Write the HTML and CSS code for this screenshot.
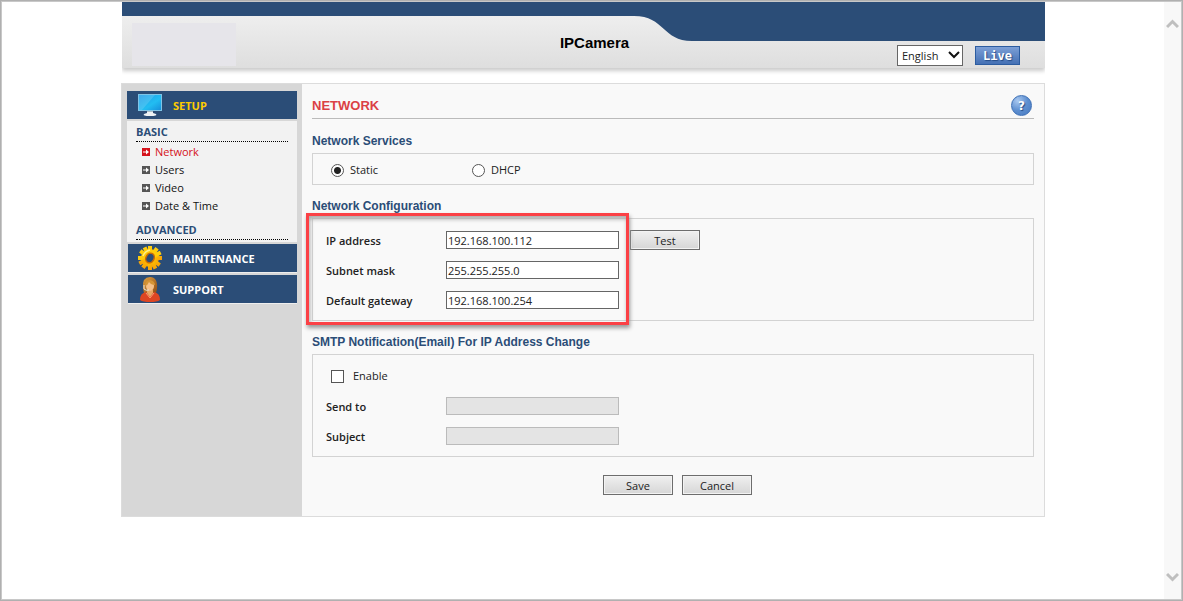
FILE: index.html
```html
<!DOCTYPE html>
<html lang="en">
<head>
	<meta charset="UTF-8">
	<meta name="viewport" content="width=device-width, initial-scale=1.0">
	<title>IPCamera</title>
	<link rel="stylesheet" href="styles.css">
</head>
<body>
<svg class="defs" aria-hidden="true">
	<defs>
		<linearGradient id="screen" x1="0" y1="0" x2="1" y2="1">
			<stop offset="0" stop-color="#1f9be6"/>
			<stop offset="0.6" stop-color="#22bdf2"/>
			<stop offset="1" stop-color="#1790dc"/>
		</linearGradient>
		<linearGradient id="gold" x1="0" y1="0" x2="1" y2="1">
			<stop offset="0" stop-color="#ffd21a"/>
			<stop offset="0.5" stop-color="#ffc800"/>
			<stop offset="1" stop-color="#ee7a10"/>
		</linearGradient>
		<linearGradient id="hair" x1="0" y1="0" x2="1" y2="1">
			<stop offset="0" stop-color="#e0a040"/>
			<stop offset="1" stop-color="#8f4d14"/>
		</linearGradient>
		<symbol id="arrow" viewBox="0 0 8 8">
			<rect width="8" height="8" fill="currentColor"/>
			<path d="M1 3.5h3V1.6L7 4 4 6.4V4.5H1z" fill="#fff"/>
		</symbol>
	</defs>
</svg>

<div class="window">
	<div class="page">
		<header class="banner">
			<svg class="banner-shape" viewBox="0 0 923 39" preserveAspectRatio="none" aria-hidden="true">
				<path d="M0 0H923V39H570C540 39 543 14 512 14H0z" fill="#2b4d77"/>
			</svg>
			<div class="logo"></div>
			<h1>IPCamera</h1>
			<div class="banner-tools">
				<div class="language">
					<select aria-label="Language">
						<option>English</option>
					</select>
					<svg width="12" height="8" viewBox="0 0 12 8" aria-hidden="true"><path d="M1 1l5 5 5-5" fill="none" stroke="#111" stroke-width="2"/></svg>
				</div>
				<button type="button" class="live">Live</button>
			</div>
		</header>

		<div class="content">
			<nav class="sidebar">
				<a href="#" class="menu-title active">
					<svg width="26" height="24" viewBox="0 0 26 24" aria-hidden="true">
						<rect x="1" y="1" width="24" height="17" fill="#7fc4e6"/>
						<rect x="2" y="2" width="22" height="15" fill="url(#screen)"/>
						<path d="M2 2h16L5 17H2z" fill="#fff" opacity=".15"/>
						<path d="M10 18h6v2l3 1q2 2-6 2t-6-2l3-1z" fill="#eef2f5"/>
						<path d="M10 18h6v1h-6z" fill="#a9bdc8"/>
					</svg>
					<span>SETUP</span>
				</a>
				<div class="submenu">
					<h2>BASIC</h2>
					<ul>
						<li><a href="#" class="selected"><svg width="8" height="8"><use href="#arrow"/></svg><span>Network</span></a></li>
						<li><a href="#"><svg width="8" height="8"><use href="#arrow"/></svg><span>Users</span></a></li>
						<li><a href="#"><svg width="8" height="8"><use href="#arrow"/></svg><span>Video</span></a></li>
						<li><a href="#"><svg width="8" height="8"><use href="#arrow"/></svg><span>Date &amp; Time</span></a></li>
					</ul>
					<h2>ADVANCED</h2>
				</div>
				<a href="#" class="menu-title lower">
					<svg width="26" height="26" viewBox="0 0 26 26" aria-hidden="true">
						<g fill="url(#gold)">
							<circle cx="13" cy="13" r="9"/>
							<path d="M11 1h4v24h-4zM1 11h24v4H1z"/>
							<path d="M11 1h4v24h-4zM1 11h24v4H1z" transform="rotate(36 13 13)"/>
							<path d="M11 1h4v24h-4zM1 11h24v4H1z" transform="rotate(63 13 13)"/>
						</g>
						<ellipse cx="13" cy="13" rx="4" ry="5" fill="#2b4d77" stroke="#c96a08" stroke-width="1.5" transform="rotate(30 13 13)"/>
						<path d="M6 11q2-5 7-6" fill="none" stroke="#fff18a" stroke-width="1.5"/>
					</svg>
					<span>MAINTENANCE</span>
				</a>
				<a href="#" class="menu-title lower">
					<svg width="26" height="26" viewBox="0 0 26 26" aria-hidden="true">
						<path d="M6 12Q5 1 13 1q8 0 7 12l-1 4H7z" fill="url(#hair)"/>
						<path d="M3 24q0-7 6-8l4 3 4-3q6 1 6 8-3 2-10 2T3 24z" fill="#dd4623"/>
						<path d="M10 14h6v3l-3 4-3-4z" fill="#e9a764"/>
						<ellipse cx="13" cy="10" rx="4" ry="5" fill="#f6c088"/>
						<path d="M8 10q0-6 5-6 5 1 5 5-4 0-6-3-1 3-4 4z" fill="#d59536"/>
						<path d="M7 9v4q2 2 5 1" fill="none" stroke="#e9e4dc"/>
						<path d="M9 17l4 5 4-5" fill="none" stroke="#ff9a70"/>
					</svg>
					<span>SUPPORT</span>
				</a>
			</nav>

			<main>
				<div class="heading">
					<h2>NETWORK</h2>
					<button type="button" class="help" aria-label="Help">?</button>
				</div>

				<form>
					<h3>Network Services</h3>
					<div class="box services">
						<label><input type="radio" name="service" checked> Static</label>
						<label><input type="radio" name="service"> DHCP</label>
					</div>

					<h3>Network Configuration</h3>
					<div class="box config">
						<div class="row">
							<label for="ip">IP address</label>
							<input type="text" id="ip" value="192.168.100.112">
							<button type="button" class="btn">Test</button>
						</div>
						<div class="row">
							<label for="mask">Subnet mask</label>
							<input type="text" id="mask" value="255.255.255.0">
						</div>
						<div class="row">
							<label for="gateway">Default gateway</label>
							<input type="text" id="gateway" value="192.168.100.254">
						</div>
						<div class="highlight"></div>
					</div>

					<h3>SMTP Notification(Email) For IP Address Change</h3>
					<div class="box">
						<div class="row">
							<label class="enable"><input type="checkbox"> Enable</label>
						</div>
						<div class="row">
							<label for="sendto">Send to</label>
							<input type="text" id="sendto" disabled>
						</div>
						<div class="row">
							<label for="subject">Subject</label>
							<input type="text" id="subject" disabled>
						</div>
					</div>

					<div class="actions">
						<button type="button" class="btn">Save</button>
						<button type="button" class="btn">Cancel</button>
					</div>
				</form>
			</main>
		</div>
	</div>

	<div class="scrollbar" aria-hidden="true">
		<svg width="13" height="10" viewBox="0 0 13 10"><path d="M1 8l5.500-5.500L12 8" fill="none" stroke="#bfbfbf" stroke-width="3"/></svg>
		<svg width="13" height="10" viewBox="0 0 13 10"><path d="M1 2l5.500 5.500L12 2" fill="none" stroke="#bfbfbf" stroke-width="3"/></svg>
	</div>
</div>
</body>
</html>
```
FILE: styles.css
```css
* {
	box-sizing: border-box;
}

body {
	margin: 0;
	font-family: "Open Sans", "Noto Sans", sans-serif;
	font-size: 11px;
	color: #222;
	background-color: #fff;
}

h1, h2, h3, ul {
	margin: 0;
	padding: 0;
}

a {
	color: inherit;
	text-decoration: none;
}

input, select, button {
	font: inherit;
	color: inherit;
	margin: 0;
}

.defs {
	position: absolute;
	width: 0;
	height: 0;
}

.window {
	display: flex;
	min-height: 100vh;
	border: 1px solid #b0b0b0;
	box-shadow: inset 0 0 0 1px #c8c8c8;
	padding: 1px;
}

.page {
	flex: 1;
	max-width: 924px;
	margin: 0 auto;
}

.scrollbar {
	display: flex;
	flex-direction: column;
	justify-content: space-between;
	align-items: center;
	width: 17px;
	padding: 17px 0;
	background-color: #f8f8f8;
}

/* banner */
.banner {
	position: relative;
	display: grid;
	grid-template-columns: 1fr auto 1fr;
	align-items: end;
	height: 66px;
	margin-left: 1px;
	padding: 0 25px 2px 10px;
	background: linear-gradient(#eee 14px, #dedede);
	box-shadow: 0 3px 4px #ccc;
	clip-path: inset(0 0 -8px 0);
}

.banner-shape {
	position: absolute;
	top: 0;
	left: 0;
	width: 100%;
	height: 39px;
}

.logo {
	width: 104px;
	height: 43px;
	background-color: #e6e5ea;
}

.banner h1 {
	position: relative;
	padding: 0 0 14px 37px;
	font: bold 15px/18px "Liberation Sans", Arial, sans-serif;
	color: #000;
}

.banner-tools {
	display: flex;
	justify-content: flex-end;
	gap: 12px;
}

.language {
	position: relative;
}

.language select {
	display: block;
	appearance: none;
	width: 66px;
	height: 21px;
	padding: 0 4px;
	border: 1px solid #666;
	border-radius: 0;
	background-color: #fff;
}

.language svg {
	position: absolute;
	top: 6px;
	right: 3px;
	pointer-events: none;
}

.live {
	align-self: center;
	width: 45px;
	height: 19px;
	padding: 0;
	border: 1px solid #2c5ca0;
	background: linear-gradient(#7c9fd6, #4470b4);
	color: #fff;
	font: bold 12px/16px "DejaVu Sans Mono", monospace;
	text-shadow: 1px 1px 1px #234a85;
}

/* layout */
.content {
	display: flex;
	min-height: 434px;
	margin-top: 15px;
	border: 1px solid #dcdcdc;
	background-color: #f9f9f9;
}

.sidebar {
	width: 180px;
	padding: 7px 5px;
	background-color: #d7d7d7;
}

.menu-title {
	display: flex;
	align-items: center;
	gap: 10px;
	height: 28px;
	padding-left: 10px;
	background-color: #2b4d77;
	color: #fff;
	font-weight: bold;
}

.menu-title.active {
	color: #ffcc00;
}

.menu-title.lower {
	height: 29px;
	margin: 2px 0 0 1px;
	padding-left: 9px;
	border-bottom: 1px solid #eee;
}

.submenu {
	margin-top: 2px;
	padding: 2px 9px;
	background-color: #f2f2f2;
}

.submenu h2 {
	border-bottom: 1px dotted #000;
	color: #2b4d77;
	font-size: 11px;
	line-height: 18px;
	font-weight: bold;
}

.submenu ul {
	padding: 1px 6px 6px;
	list-style: none;
}

.submenu li a {
	display: flex;
	align-items: center;
	gap: 5px;
	line-height: 18px;
	color: #111;
}

.submenu li svg {
	color: #555;
}

.submenu li a.selected,
.submenu li a.selected svg {
	color: #d5121b;
}

main {
	flex: 1;
	padding: 9px 10px 10px;
}

.heading {
	display: flex;
	justify-content: space-between;
	align-items: center;
	height: 26px;
	border-bottom: 1px solid #bbb;
}

.heading h2 {
	color: #db4145;
	font: bold 13px/16px "Liberation Sans", Arial, sans-serif;
}

.help {
	width: 21px;
	height: 21px;
	margin-right: 2px;
	padding: 0;
	border: 1px solid #3c6fb5;
	border-radius: 50%;
	background: radial-gradient(circle at 30% 25%, #a9c8f0, #5e8fd0 50%, #4679c0);
	color: #fff;
	font: bold 12px/16px "DejaVu Sans", sans-serif;
	text-shadow: 1px 1px 1px #234a85;
}

/* form */
form {
	padding-top: 1px;
}

h3 {
	padding: 14px 0 4px;
	color: #2b4d77;
	font: bold 12px/15px "Liberation Sans", Arial, sans-serif;
}

.box {
	padding: 6px 13px 5px;
	border: 1px solid #d3d3d3;
}

.services {
	display: flex;
	padding: 6px 18px 4px;
}

.services label,
.enable {
	display: flex;
	align-items: center;
	gap: 6px;
	width: 141px;
	line-height: 20px;
}

.row {
	display: flex;
	align-items: center;
	height: 30px;
}

.row label {
	width: 120px;
	font-weight: 600;
}

.row .enable {
	padding-left: 5px;
	gap: 9px;
	font-weight: normal;
}

input[type="text"] {
	width: 173px;
	height: 18px;
	padding: 0 1px;
	border: 1px solid #666;
	background-color: #fff;
}

input[type="text"]:disabled {
	border-color: #bbb;
	background-color: #e4e4e4;
}

input[type="radio"],
input[type="checkbox"] {
	appearance: none;
	width: 13px;
	height: 13px;
	border: 1px solid #555;
	background-color: #fff;
}

input[type="radio"] {
	border-radius: 50%;
}

input[type="radio"]:checked {
	background: radial-gradient(circle, #222 3px, #fff 4px);
}

.btn {
	width: 70px;
	height: 20px;
	padding: 0;
	border: 1px solid #6d6d6d;
	background: linear-gradient(#f0f0f0, #d6d6d6);
	box-shadow: inset 0 0 0 1px #f3f3f3;
}

.row .btn {
	margin-left: 11px;
}

/* red frame around the address fields */
.config {
	position: relative;
}

.highlight {
	position: absolute;
	top: -6px;
	left: -7px;
	width: 323px;
	height: 112px;
	border: 3px solid #fb4146;
	box-shadow: 1px 3px 4px #999, inset 1px 3px 4px #aaa;
	pointer-events: none;
}

.actions {
	display: flex;
	justify-content: center;
	gap: 9px;
	padding: 18px 0 11px 9px;
}
```
